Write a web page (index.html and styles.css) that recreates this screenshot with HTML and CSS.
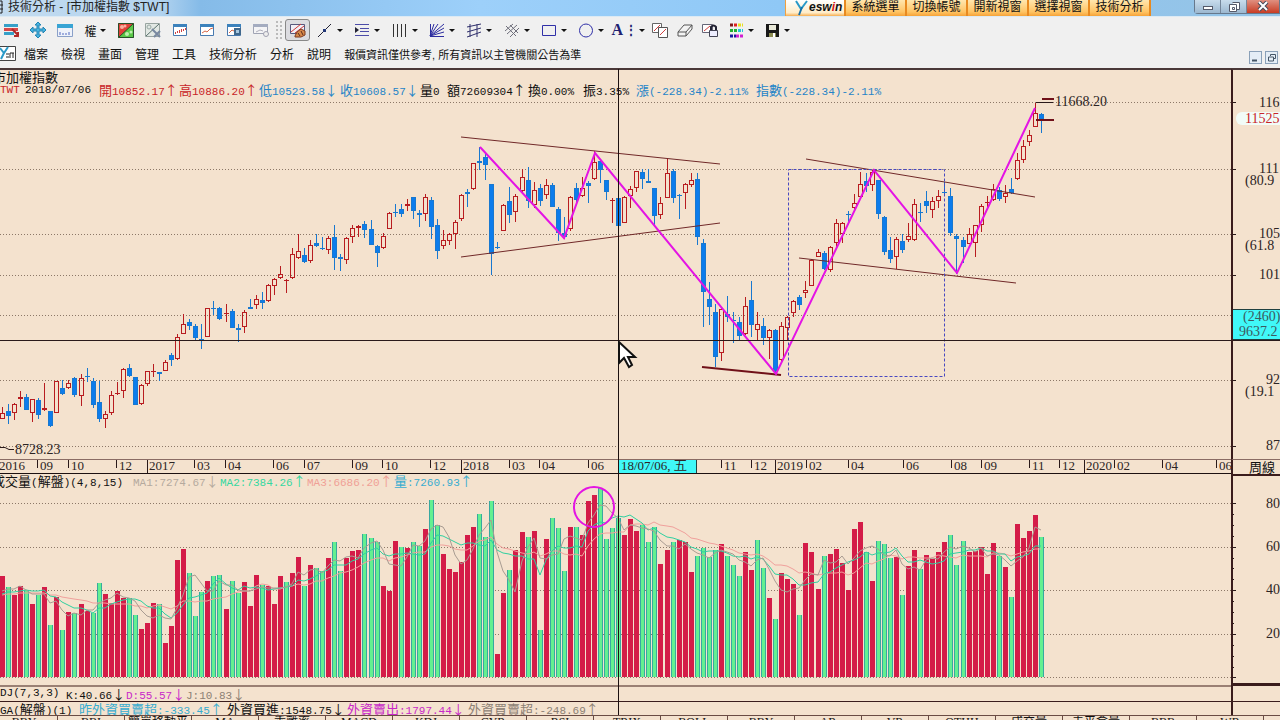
FILE: index.html
```html
<!DOCTYPE html>
<html lang="zh-Hant">
<head>
<meta charset="utf-8">
<title>技術分析 - [市加權指數 $TWT]</title>
<link rel="stylesheet" href="styles.css">
</head>
<body>
<header class="titlebar">
  <h1 class="title"><svg class="app-icon" width="5" height="14"><path d="M0 1h2v12H0M0 5h3M0 9h3" stroke="#222" fill="none"/></svg>技術分析 - [市加權指數 $TWT]</h1>
  <nav class="quick">
    <a class="brand" href="#" aria-label="Yeswin"><svg width="14" height="18" viewBox="0 0 14 18"><path d="M1 1l5 8 6-8" fill="none" stroke="#2a9ac8" stroke-width="2"/><path d="M7 7L4 15" stroke="#1670a8" stroke-width="2"/></svg><span>esw<em>i</em>n</span></a>
    <a href="#">系統選單</a><a href="#">切換帳號</a><a href="#">開新視窗</a><a href="#">選擇視窗</a><a href="#">技術分析</a>
  </nav>
  <div class="window-buttons">
    <button aria-label="最小化"><svg width="12" height="10"><rect x="1.500" y="4.500" width="9" height="3" fill="#fff" stroke="#555a6a"/></svg></button>
    <button aria-label="還原"><svg width="12" height="12"><path d="M4.500 1.500h7v7h-3M1.500 3.500h7v7h-7z" fill="#fff" stroke="#555a6a"/><path d="M4.500 6.500h2v2h-2z" fill="none" stroke="#555a6a"/></svg></button>
    <button class="close" aria-label="關閉"><svg width="12" height="12"><path d="M2 1l8 8M10 1l-8 8" stroke="#444a5a" stroke-width="4"/><path d="M2 1l8 8M10 1l-8 8" stroke="#fff" stroke-width="2"/></svg></button>
  </div>
</header>

<div class="toolbar" role="toolbar" aria-label="工具列">
  <button class="tool" aria-label="清單"><svg width="18" height="18"><path d="M2 3h14v3H2z" fill="#36a0c8"/><path d="M2 7h14v3H2z" fill="#d84848"/><path d="M2 11h10v3H2z" fill="#36a0c8"/><path d="M10 8l6 6v-3M16 15h-4" fill="none" stroke="#b02828" stroke-width="2"/></svg></button>
  <button class="tool" aria-label="移動"><svg width="18" height="18"><path d="M8 4v4H4V6L1 9l3 3v-2h4v4H6l3 3 3-3h-2v-4h4v2l3-3-3-3v2h-4V4h2L9 1 6 4z" fill="#48b4e0" stroke="#2284b4"/></svg></button>
  <button class="tool" aria-label="期間"><svg width="18" height="18"><path d="M1.500 3.500h15v12h-15z" fill="#eef2fa" stroke="#8aa0c8"/><path d="M1 3h16v4H1z" fill="#38a4d4"/><path d="M4 11v3M7 12v2M10 12v2M13 11v3" stroke="#5068c0"/></svg></button>
  <button class="drop text-drop">權<i></i></button>
  <button class="tool" aria-label="漲跌"><svg width="18" height="18"><path d="M1 2h16v15H1z" fill="#5ac848"/><path d="M1 2h16L1 17z" fill="#e04038"/><path d="M1.500 2.500h15v14h-15zM2 16L16 3" fill="none" stroke="#28502a"/><circle cx="5" cy="6" r="2" fill="#f8b0a0"/><circle cx="8" cy="5" r="1.500" fill="#f8b0a0"/><circle cx="10" cy="13" r="2" fill="#c0f0b0"/><circle cx="14" cy="11" r="1.500" fill="#c0f0b0"/></svg></button>
  <button class="tool" aria-label="比較"><svg width="18" height="18"><path d="M1.500 2.500h14v13h-14z" fill="#e2e8e4" stroke="#98a4a0"/><path d="M2 15L15 3" stroke="#58706c"/><circle cx="5" cy="6" r="2" fill="none" stroke="#98a8a4"/><path d="M8 8l8 8M16 10l-6 6" stroke="#7888a0" stroke-width="2"/></svg></button>
  <button class="tool" aria-label="日線"><svg width="18" height="18"><path d="M2.500 3.500h13v11h-13z" fill="#fff" stroke="#487ab0"/><path d="M2 3h14v3H2z" fill="#3c82bc"/><path d="M4.500 13v-2M6.500 12v-2M8.500 12V9M10.500 11V8M12.500 10V8M14.500 9V7" stroke="#d04040"/></svg></button>
  <button class="tool" aria-label="走勢"><svg width="18" height="18"><path d="M2.500 3.500h13v11h-13z" fill="#fff" stroke="#487ab0"/><path d="M2 3h14v3H2z" fill="#3c82bc"/><path d="M4 12l3-2 2 1 3-3 3-1" fill="none" stroke="#d86848"/></svg></button>
  <button class="tool" aria-label="明細"><svg width="18" height="18"><path d="M2.500 3.500h13v11h-13z" fill="#fff" stroke="#487ab0"/><path d="M2 3h14v3H2z" fill="#3c82bc"/><path d="M4 12l3-3 2 1" fill="none" stroke="#d86848"/><path d="M9 7h7v7H9z" fill="#40688c"/><path d="M11 9h3v3h-3z" fill="#a8c8e0"/></svg></button>
  <button class="tool" aria-label="查詢" disabled><svg width="18" height="18"><path d="M1.500 3.500h14v9h-14z" fill="#f4f4f6" stroke="#a0a4b4"/><path d="M1 3h15v3H1z" fill="#a4acc0"/><path d="M4 11l4-2 3 1" fill="none" stroke="#b0b0bc"/><circle cx="14" cy="13" r="2.500" fill="#eee" stroke="#a0a0b0"/></svg></button>
  <span class="grip"></span>
  <button class="tool pressed" aria-label="畫線"><svg width="18" height="18"><path d="M1.500 3.500h14v9h-14z" fill="#f0eef6" stroke="#58587c"/><path d="M2 11l10-8M6 12l9-7" stroke="#d03838"/><path d="M6 15l2-4 4-3 4 2v4l-4 2H6z" fill="#d88848" stroke="#7c3820"/><path d="M9 12l2 3M12 10l2 4" stroke="#5a2c20"/></svg></button>
  <div class="draw-tools">
    <button class="drop" aria-label="直線"><svg width="18" height="18"><path d="M2 16L15 3" stroke="#223"/><path d="M7 8h3v3H7z" fill="#223878"/></svg><i></i></button>
    <button class="drop" aria-label="水平線"><svg width="18" height="18"><path d="M2 3.500h14M7 7.500h9M7 10.500h9M2 14.500h14" stroke="#4c4ca8"/><path d="M2 6l4 3-4 3z" fill="#223"/></svg><i></i></button>
    <button class="drop" aria-label="垂直線"><svg width="18" height="18"><path d="M2.500 3v13M6.500 3v13M10.500 3v13M14.500 3v13" stroke="#333"/></svg><i></i></button>
    <button class="drop" aria-label="扇形線"><svg width="18" height="18"><path d="M2.500 3v13M2 15.500h14M2 15L16 3M2 15L10 3M2 15l14-8M2 15L6 3M2 15l14-4" fill="none" stroke="#2c2ca0"/></svg><i></i></button>
    <button class="drop" aria-label="通道"><svg width="18" height="18"><path d="M2 6l14-3M2 11l14-4M2 16l14-5M5 3v13M12 3v13" stroke="#30306c"/></svg><i></i></button>
    <button class="drop" aria-label="平行線"><svg width="18" height="18"><path d="M2 10l8-7M4 13L14 4M7 16l9-9M3 5l10 10M7 4l8 8" stroke="#70707c"/></svg><i></i></button>
    <button class="drop" aria-label="矩形"><svg width="18" height="18"><path d="M2.500 4.500h13v10h-13z" fill="none" stroke="#3030a8"/></svg><i></i></button>
    <button class="drop" aria-label="圓形"><svg width="18" height="18"><circle cx="9" cy="9.500" r="6.500" fill="none" stroke="#3030a8"/></svg><i></i></button>
    <button class="drop letter">A<span>⋮</span><i></i></button>
  </div>
  <button class="tool small" aria-label="複製"><svg width="18" height="18"><path d="M1.500 2.500h9v9h-9z" fill="#fff" stroke="#666"/><path d="M7.500 6.500h9v10h-9z" fill="#fff" stroke="#555"/><path d="M3 10l6-6M9 14l6-6" stroke="#d04040"/></svg></button>
  <button class="tool small" aria-label="橡皮擦"><svg width="18" height="18"><path d="M2 11l6-7h8l-6 7zM2 11v4h8l6-7V4M10 11v4" fill="#f4f4f4" stroke="#555"/></svg></button>
  <button class="tool small" aria-label="鎖定"><svg width="18" height="18"><path d="M1.500 3.500h10v8h-10z" fill="#fff" stroke="#667"/><path d="M3 10l6-5" stroke="#d04040"/><path d="M8.500 9.500h8v6h-8z" fill="#eef" stroke="#445"/><path d="M10 9V6q2.500-3 5 0v3" fill="none" stroke="#223" stroke-width="2"/></svg></button>
  <button class="drop" aria-label="顏色"><svg width="18" height="18"><g stroke-width="3" stroke-dasharray="3 1"><path d="M3 4h4" stroke="#801818"/><path d="M7 4h4" stroke="#e02020"/><path d="M11 4h5" stroke="#e8e020"/><path d="M3 9.500h7" stroke="#20b030"/><path d="M11 9.500h5" stroke="#20c8d8"/><path d="M3 15h6" stroke="#1818a0"/><path d="M9 15h7" stroke="#d020d0"/></g></svg><i></i></button>
  <button class="drop" aria-label="儲存"><svg width="18" height="18"><path d="M3 3h13v13H3z" fill="#181818"/><path d="M6 4h7v5H6z" fill="#e8e8d8"/><path d="M6 12h7v4H6z" fill="#8c8c50"/><path d="M10 12h2v4h-2z" fill="#fff"/></svg><i></i></button>
</div>

<div class="menubar">
  <svg class="logo" width="16" height="17"><path d="M0 1.500h15.500v14H0" fill="#fff" stroke="#444"/><path d="M0 3l4 5 4-6M4 8l-3 6" fill="none" stroke="#2a9ac8" stroke-width="2"/><path d="M6 9h3M6 12h3M10 8v5M13 8v5M10 8h4" stroke="#222"/></svg>
  <button>檔案</button><button>檢視</button><button>畫面</button><button>管理</button><button>工具</button><button>技術分析</button><button>分析</button><button>說明</button>
  <span class="notice">報價資訊僅供參考, 所有資訊以主管機關公告為準</span>
  <div class="mdi">
    <button aria-label="最小化子視窗"><svg width="11" height="11"><path d="M2 8.500h5" stroke="#456" stroke-width="2"/></svg></button>
    <button aria-label="還原子視窗"><svg width="11" height="11"><path d="M4.500 4V2.500h5v4H8M2.500 5h5v4h-5z" fill="none" stroke="#456"/></svg></button>
  </div>
</div>

<main class="workspace">
  <section class="pane price">
    <svg id="price" class="plot" role="img" aria-label="K線圖"></svg>
    <div class="overlay">
      <h2>市加權指數</h2>
      <div class="quote">
        <span class="up">TWT</span><span>2018/07/06</span>
        <span class="up"><b>開</b>10852.17<b>↑</b></span>
        <span class="up"><b>高</b>10886.20<b>↑</b></span>
        <span class="down"><b>低</b>10523.58<b>↓</b></span>
        <span class="down"><b>收</b>10608.57<b>↓</b></span>
        <span><b>量</b>0</span>
        <span><b>額</b>72609304<b>↑</b></span>
        <span><b>換</b>0.00%</span>
        <span><b>振</b>3.35%</span>
        <span class="down"><b>漲</b>(-228.34)-2.11%</span>
        <span class="down"><b>指數</b>(-228.34)-2.11%</span>
      </div>
    </div>
  </section>
  <svg id="price-scale" class="scale price-scale"></svg>

  <svg id="dates" class="dates"></svg>
  <div class="scale period">周線</div>

  <section class="pane volume">
    <svg id="volume" class="plot" role="img" aria-label="成交量圖"></svg>
    <div class="averages">
      <span><b>成交量</b>(<b>解盤</b>)(4,8,15)</span>
      <span class="ma1">MA1:7274.67<b>↓</b></span>
      <span class="ma2">MA2:7384.26<b>↑</b></span>
      <span class="ma3">MA3:6686.20<b>↑</b></span>
      <span class="vol"><b>量</b>:7260.93<b>↑</b></span>
    </div>
  </section>
  <svg id="volume-scale" class="scale volume-scale"></svg>

  <div class="row kdj">
    <span>DJ(7,3,3)</span><span>K:40.66<b>↓</b></span><span class="magenta">D:55.57<b>↓</b></span><span class="muted">J:10.83<b>↓</b></span>
  </div>
  <div class="scale cell"></div>
  <div class="row flows">
    <span>GA(<b>解盤</b>)(1)</span>
    <span class="vol"><b>昨外資買賣超</b>:-333.45<b>↑</b></span>
    <span><b>外資買進</b>:1548.75<b>↓</b></span>
    <span class="magenta"><b>外資賣出</b>:1797.44<b>↓</b></span>
    <span class="muted"><b>外資買賣超</b>:-248.69<b>↑</b></span>
  </div>
  <div class="scale cell"></div>
  <div class="crosshair"></div>
  <svg class="pointer" width="20" height="30"><path d="M1 1v21l5-5 5 9 3-2-4-8h7z" fill="#fff" stroke="#111" stroke-width="2"/></svg>
</main>

<nav class="tabs">
  <button>BBY</button><button>BBI</button><button>簡單移動平</button><button>MA</button><button>乖離率</button><button>MACD</button><button>KDJ</button><button>CYR</button><button>RSI</button><button>TRIX</button><button>BOLL</button><button>BBY</button><button>AR</button><button>VR</button><button>OTHH</button><button>成交量</button><button>未平倉量</button><button>BBB</button><button>WR</button><button>VR</button>
</nav>
<script src="chart.js"></script>
</body>
</html>
```
FILE: styles.css
```css
:root {
  --paper: #f4e2ce;
  --ink: #2a1a1a;
  --rule: #3a1c1c;
  --cjk: "Noto Sans CJK TC";
}
* { box-sizing: border-box; }
body {
  margin: 0;
  height: 100vh;
  overflow: hidden;
  background: var(--paper);
  color: #111;
  font: 12px "Liberation Sans", var(--cjk), sans-serif;
}
button { margin: 0; padding: 0; border: 0; background: none; color: inherit; font: inherit; }
a { color: inherit; text-decoration: none; }
svg { display: block; flex: none; }
h1, h2 { margin: 0; font-weight: normal; }
b { font: 13px/1 var(--cjk), sans-serif; }

.titlebar {
  display: flex;
  height: 17px;
  background: linear-gradient(90deg, #c4dcf0 0, #b2d3ef 160px, #85bbe8 200px, #9dd0fa 480px, #8fc8f6 780px, #94c4e8 1200px);
  border-bottom: 1px solid #dceaf4;
  overflow: hidden;
}
.title { display: flex; gap: 3px; flex: 1; font-size: 12px; line-height: 14px; white-space: pre; color: #222; }
.quick { display: flex; height: 17px; }
.quick a {
  width: 61px;
  border-right: 2px solid #e88a20;
  background: linear-gradient(#ffe6ae, #ffc464 70%, #f49a2c);
  line-height: 15px;
  text-align: center;
}
.quick .brand { display: flex; padding-left: 9px; border-left: 1px solid #f0a040; font-weight: bold; font-style: italic; background: linear-gradient(#fff, #ffecc8 75%, #f49a2c); }
.brand em { color: #d81818; }
.window-buttons { display: flex; height: 14px; margin-left: 43px; border: 1px solid #66788c; border-top: 0; border-radius: 0 0 0 4px; }
.window-buttons button { display: grid; place-items: center; width: 26px; border-right: 1px solid #74869a; background: linear-gradient(#c8dcec, #9cb8d0); }
.window-buttons .close { width: 32px; border: 0; background: linear-gradient(#e09080, #c83c24); }

.toolbar { display: flex; align-items: center; height: 26px; margin-left: -3px; background: #f0f0f0; }
.tool { display: grid; place-items: center; width: 27px; height: 22px; }
.small { width: 25px; }
.pressed { width: 25px; border: 1px solid #888; border-radius: 3px; background: #dcdce0; margin-right: 1px; }
.drop { display: flex; align-items: center; justify-content: center; gap: 3px; width: 36px; height: 22px; }
.drop i { border: 3px solid transparent; border-top-color: #111; border-bottom: 0; width: 0; }
.text-drop { width: 34px; }
.draw-tools { display: flex; width: 336px; }
.draw-tools .drop { flex: 1; }
.letter { font: bold 16px "Liberation Serif", serif; color: #202070; gap: 2px; }
.letter span { font-size: 12px; }
.grip { width: 8px; height: 20px; margin: 0 2px 0 1px; background: radial-gradient(circle, #bbb 1px, transparent 1px) 0 0 / 4px 4px; }

.menubar { display: flex; align-items: center; gap: 13px; height: 26px; padding-bottom: 4px; border-bottom: 1px solid #4a3838; background: #f0f0f0; }
.menubar .logo { margin-right: -5px; }
.notice { font-size: 11px; white-space: nowrap; }
.mdi { display: flex; gap: 3px; margin: 7px 2px 0 auto; }
.mdi button { border: 1px solid #8aa0b8; background: #e4edf6; }

.workspace {
  position: relative;
  display: grid;
  grid-template-columns: minmax(0, 1fr) 49px;
  grid-template-rows: 390px 15px 211px 16px 14px;
  font: 14px/1 "Liberation Serif", serif;
}
.pane { display: grid; overflow: hidden; }
.pane > * { grid-area: 1 / 1; }
.price, .price-scale { border-top: 1px solid #4a3838; }
.plot { width: 100%; height: 100%; }
h2 { margin-left: -7px; font: 13px/13px var(--cjk), sans-serif; }
.quote, .averages, .row { font: 11px/14px "Liberation Mono", monospace; white-space: nowrap; }
.quote {
  display: grid;
  grid-template-columns: 25px 74px repeat(2, 80px) 81px 80px 27px 81px 55px 53px 120px auto;
}
.up { color: #c82428; }
.down { color: #2484c8; }
.scale { border-left: 2px solid var(--rule); width: 100%; height: 100%; overflow: hidden; }
.dates { width: 100%; height: 100%; border: 1px solid #1c1010; border-top-color: #8a6c64; border-width: 1px 0; font-size: 13px; }
.period { border-top: 1px solid #8a6c64; padding-left: 16px; font: 13px/13px var(--cjk), sans-serif; }
.volume-scale { border-top: 2px solid var(--rule); border-bottom: 2px solid var(--rule); }
.averages {
  display: grid;
  grid-template-columns: 141px repeat(3, 87px) auto;
  align-self: start;
  justify-content: start;
  margin-left: -8px;
  line-height: 13px;
}
.ma1 { color: #b4aa9e; }
.ma2 { color: #34d8a0; }
.ma3 { color: #f0a096; }
.vol { color: #38acd0; }
.magenta { color: #c828c8; }
.muted { color: #8c8074; }
.row { display: grid; border-top: 1px solid var(--rule); line-height: 13px; overflow: hidden; }
.kdj { grid-template-columns: 66px 60px 60px 1fr; border-top: 2px solid #9a8074; }
.flows { grid-template-columns: 79px 148px 120px 121px 1fr; }
.cell { border-top: 1px solid var(--rule); }
.crosshair { position: absolute; top: 0; bottom: 0; left: 618px; width: 1px; background: #1c1010; }
.pointer { position: absolute; top: 272px; left: 618px; }

.tabs { display: flex; border-top: 1px solid #6a4c44; font: 12px/12px "Liberation Serif", var(--cjk), serif; margin-left: -9px; }
.tabs button { flex: none; width: 67px; border-right: 1px solid #6a4c44; white-space: nowrap; overflow: hidden; }

.grid { stroke: #8c7868; stroke-dasharray: 1 2; }
.tick { stroke: var(--ink); }
.candle-up { stroke: #b81c20; fill: none; }
.candle-down { stroke: #1878d0; fill: #0c7cec; }
.bar-up { fill: #d41c48; }
.bar-edge { fill: #38a8a0; }
.bar-down { fill: #64f090; }
.line { fill: none; stroke-width: 1; }
.line.ma1 { stroke: #a89c92; }
.line.ma2 { stroke: #30d0a0; }
.line.ma3 { stroke: #f0a09c; }
.trend { stroke: #702828; }
.heavy { stroke: #701018; stroke-width: 2; }
.zigzag { fill: none; stroke: #e414e4; stroke-width: 2; }
.selection { fill: none; stroke: #4848c0; stroke-dasharray: 3 2; }
.axis-text { fill: #2c2424; }
.cursor-box { fill: #40f8f8; stroke: #204040; }
.last-box { fill: #f2fcf8; }
.last-text { fill: #c82428; }
.dim { fill: #3c5a60; }
```
FILE: chart.js
```js
const NS = "http://www.w3.org/2000/svg";
const PRICE_TOP = 70, VOLUME_TOP = 474, VOLUME_BASE = 677;
const barX = i => 2 + Math.round(i * 6.041);

function add(parent, tag, attrs, text) {
  const el = document.createElementNS(NS, tag);
  for (const key in attrs) el.setAttribute(key, attrs[key]);
  if (text !== undefined) el.textContent = text;
  parent.appendChild(el);
  return el;
}
function layer(id, top) {
  return add(document.getElementById(id), "g", { transform: `translate(0,${-top})` });
}

/* direction, high, low, body top, body bottom */
const candles = `u407,419,413,419 d404,424,411,416 u403,420,404,413 u391,407,397,399 d394,410,397,410 u399,422,399,413 d398,419,400,415 u383,411,408,410 d411,427,411,426 u381,413,381,413
d380,395,388,394 u380,389,383,388 d377,397,378,395 u374,406,378,396 d368,382,376,377 d378,408,381,405 d381,422,402,419 u411,428,414,419 u391,415,395,413 u382,395,393,393
u368,398,369,391 d364,377,368,376 d377,405,377,405 u384,405,385,404 u371,386,371,384 u364,377,371,371 d372,381,372,374 u360,371,362,371 d353,366,355,360 u334,360,337,359
u314,334,324,334 d319,330,322,326 d324,340,326,338 d324,349,339,340 u308,337,308,337 d301,315,308,308 d307,320,308,319 u304,322,313,313 d309,328,311,328 d324,342,328,330
u310,333,312,327 d299,309,307,309 u295,309,299,305 d292,309,300,303 u284,302,285,301 u278,295,279,286 u266,279,274,278 u279,293,280,280 u248,279,254,278 u234,259,251,258
d248,263,255,262 u240,263,245,261 d234,247,243,246 d237,250,248,249 u236,254,238,250 d225,270,237,258 d254,271,257,259 u237,264,238,260 u225,243,228,237 u225,237,226,228
d221,238,224,230 d220,245,229,245 d245,267,246,253 u233,249,236,248 u212,229,213,229 d204,217,212,212 d204,217,209,214 u199,211,204,206 d197,219,197,211 d210,227,213,215
u194,221,197,214 d197,239,200,227 d219,259,225,251 u230,249,240,246 u233,245,234,241 u220,249,222,234 u194,221,195,219 d189,207,192,194 u163,190,163,189 d147,170,161,163
d153,180,157,165 d184,275,184,254 d242,249,247,248 u204,231,205,231 d187,223,201,215 u194,222,196,212 u169,193,177,191 d167,208,180,201 u182,208,190,205 d184,206,188,201
u179,199,185,195 d183,207,185,207 d207,241,209,233 d217,239,233,237 u196,231,197,229 d183,203,188,200 u177,197,188,196 d181,203,183,186 u151,180,162,179 d160,183,161,170
d180,200,180,192 u198,223,200,200 d198,226,198,226 u196,223,197,223 u186,208,189,196 u171,192,171,188 d169,189,172,179 d169,183,181,183 d188,226,188,216 u197,219,203,215
u158,198,173,198 d169,203,171,198 d194,219,195,196 u183,209,184,193 u173,187,180,185 d173,245,179,237 d239,327,243,292 d282,325,299,307 d304,367,312,357 u308,361,309,353
d296,322,314,317 d312,343,320,320 d317,341,322,336 u297,335,306,334 d281,337,300,325 u312,340,324,330 d318,345,326,338 u329,359,330,338 d329,375,330,371 u322,361,326,360
u316,341,317,328 u300,317,301,313 d295,310,297,305 u281,298,290,293 u259,286,260,286 u249,257,252,257 d251,270,253,269 u246,272,247,270 u219,247,223,243 u222,243,223,234
d211,223,214,215 u194,209,203,208 u172,197,184,197 d173,192,181,186 u170,191,172,185 d180,219,180,214 d216,255,217,252 d237,263,250,259 u237,269,239,257 d234,253,241,250
u223,242,236,240 u199,241,204,240 d203,222,212,212 d191,213,201,206 u197,218,201,210 u190,208,196,201 d182,194,192,193 d188,236,196,233 d234,274,236,239 d237,263,240,247
u228,244,234,244 u225,257,225,243 u204,232,206,225 u196,207,202,202 u184,201,189,200 d187,201,190,199 u185,203,193,197 d178,194,189,193 u153,180,160,179 u140,163,146,160
u130,146,135,142 u103,127,113,127 d113,133,114,119`.split(/\s+/);

/* colour and top of each volume bar */
const volumes = `r576 g587 r595 r586 g590 r604 g595 r587 g625 r597 g630 r612 g613 r604 r611 g613 g583 r594 r603 r591
r598 g598 g615 r629 r623 r603 g604 r643 r626 r560 r549 g573 g616 g592 r581 g576 g575 r609 g581 g593
r582 r606 r575 g585 r586 r604 r576 g582 r573 r557 g586 r565 g568 g571 r558 g542 g571 r558 r551 r550
g534 g538 g542 r586 r591 r541 g547 r548 g542 g546 r529 g500 g525 r554 r569 r572 r562 r535 r527 g514
g537 g501 r654 r593 g570 r550 r532 g537 r531 g630 r539 g518 g528 g571 r527 g527 r535 r501 r495 g488
g539 g528 g518 r535 r519 r531 g525 g542 g527 r564 r550 g542 r540 r542 r572 g556 g548 g557 g550 r544
g556 g565 g576 r552 r570 g540 g568 r598 g619 r573 r579 r584 g615 r543 r552 r589 g556 r554 r549 r563
r590 r529 r522 g552 r581 g541 g544 g558 r557 g595 r566 r550 g569 r555 r559 r552 r542 g535 g565 g541
r552 r551 r547 r574 r543 g556 r567 g597 r524 r538 r531 r515 g537`.split(/\s+/);

const priceGrid = [102, 169, 234, 275, 315, 380, 446];
const volumeGrid = [503, 547, 590, 634, 677];

function gridLines(g, rows) {
  for (const y of rows) add(g, "line", { class: "grid", x1: 0, x2: "100%", y1: y + .5, y2: y + .5 });
}
function line(g, cls, x1, y1, x2, y2) {
  add(g, "line", { class: cls, x1, y1, x2, y2 });
}

function drawPrice() {
  const g = layer("price", PRICE_TOP);
  gridLines(g, priceGrid);
  candles.forEach((row, i) => {
    const [high, low, top, bottom] = row.slice(1).split(",").map(Number);
    const x = barX(i) + .5;
    const cls = row[0] === "u" ? "candle-up" : "candle-down";
    add(g, "path", { class: cls, d: `M${x} ${high}V${top}M${x} ${bottom}V${low}` });
    if (bottom - top < 2) add(g, "path", { class: cls, d: `M${x - 2.5} ${top + .5}h5M${x} ${top}v2` });
    else add(g, "rect", { class: cls, x: x - 2, y: top + .5, width: 4, height: bottom - top - 1 });
  });
  line(g, "trend", 461, 137, 720, 164);
  line(g, "trend", 461, 257, 720, 223);
  line(g, "trend", 806, 159, 1035, 197);
  line(g, "trend", 799, 258, 1016, 283);
  line(g, "heavy", 702, 367, 781, 375);
  line(g, "heavy", 1042, 99, 1054, 99);
  line(g, "heavy", 1036, 120, 1054, 120);
  line(g, "tick", 1036, 102.5, 1053, 102.5);
  add(g, "rect", { class: "selection", x: 788.5, y: 169.5, width: 156, height: 207 });
  add(g, "polyline", { class: "zigzag", points: "480,147 564,238 595,153 776,374 874,170 957,273 1035,108" });
  add(g, "path", { class: "tick", fill: "none", d: "M0 447.500h5l4 2h5" });
  add(g, "text", { class: "axis-text", x: 15, y: 454 }, "8728.23");
  add(g, "text", { class: "axis-text", x: 1055, y: 106 }, "11668.20");
  add(g, "line", { class: "tick", x1: 0, x2: "100%", y1: 340.5, y2: 340.5 });
}

function drawPriceScale() {
  const g = layer("price-scale", PRICE_TOP);
  for (const y of priceGrid) line(g, "tick", 0, y + .5, 3, y + .5);
  add(g, "rect", { class: "last-box", x: 3, y: 112, width: 50, height: 13, rx: 6 });
  add(g, "text", { class: "last-text", x: 12, y: 123 }, "11525");
  add(g, "rect", { class: "cursor-box", x: -1, y: 309.5, width: 60, height: 30 });
  const labels = [[26, 107, "116"], [26, 173, "111"], [12, 185, "(80.9"], [26, 238, "105"], [12, 250, "(61.8"],
    [26, 279, "101"], [33, 384, "92"], [12, 396, "(19.1"], [33, 450, "87"]];
  for (const [x, y, text] of labels) add(g, "text", { class: "axis-text", x, y }, text);
  add(g, "text", { class: "dim", x: 10, y: 321 }, "(2460)");
  add(g, "text", { class: "dim", x: 6, y: 336 }, "9637.2");
  line(g, "tick", 0, 340.5, 49, 340.5);
}

function drawDates() {
  const g = layer("dates", 460);
  const labels = [[-3, "2016"], [37, "09"], [68, "10"], [116, "12"], [147, "2017"], [194, "03"], [225, "04"], [273, "06"], [304, "07"],
    [352, "09"], [382, "10"], [430, "12"], [461, "2018"], [509, "03"], [539, "04"], [588, "06"], [721, "11"], [751, "12"],
    [775, "2019"], [806, "02"], [848, "04"], [903, "06"], [951, "08"], [981, "09"], [1029, "11"], [1059, "12"], [1084, "2020"],
    [1114, "02"], [1162, "04"], [1216, "06"]];
  for (const [x, text] of labels) {
    const year = text.length > 2;
    line(g, "tick", x + .5, 460, x + .5, year ? 473 : 468);
    add(g, "text", { class: "axis-text", x: x + (year ? 2 : 3), y: 470 }, text);
  }
  add(g, "rect", { class: "cursor-box", x: 618.5, y: 459.5, width: 78, height: 14 });
  add(g, "text", { class: "axis-text", x: 621, y: 470 }, "18/07/06, 五");
}

function drawVolume() {
  const g = layer("volume", VOLUME_TOP);
  gridLines(g, volumeGrid);
  const tops = volumes.map(v => Number(v.slice(1)));
  tops.forEach((top, i) => {
    const x = barX(i) - 2, height = VOLUME_BASE - top;
    if (volumes[i][0] === "r") add(g, "rect", { class: "bar-up", x, y: top, width: 5, height });
    else {
      add(g, "rect", { class: "bar-edge", x, y: top, width: 5, height });
      add(g, "rect", { class: "bar-down", x: x + 1, y: top, width: 3, height });
    }
  });
  [[15, "ma3"], [8, "ma2"], [4, "ma1"]].forEach(([span, cls]) => {
    const history = Array(span - 1).fill(596).concat(tops);
    const points = tops.map((_, i) => {
      const sum = history.slice(i, i + span).reduce((a, b) => a + b, 0);
      return `${barX(i)},${Math.round(sum / span)}`;
    });
    add(g, "polyline", { class: `line ${cls}`, points: points.join(" ") });
  });
  add(g, "circle", { class: "zigzag", cx: 594, cy: 507, r: 20 });
}

function drawVolumeScale() {
  const g = layer("volume-scale", VOLUME_TOP + 2);
  for (let i = 0; i <= 16; i++) {
    const y = Math.round(503 + i * 10.9) + .5;
    line(g, "tick", 0, y, i % 4 ? 1 : 3, y);
  }
  [[508, "80"], [551, "60"], [594, "40"], [638, "20"]].forEach(([y, text]) =>
    add(g, "text", { class: "axis-text", x: 33, y }, text));
}

drawPrice();
drawPriceScale();
drawDates();
drawVolume();
drawVolumeScale();
```
